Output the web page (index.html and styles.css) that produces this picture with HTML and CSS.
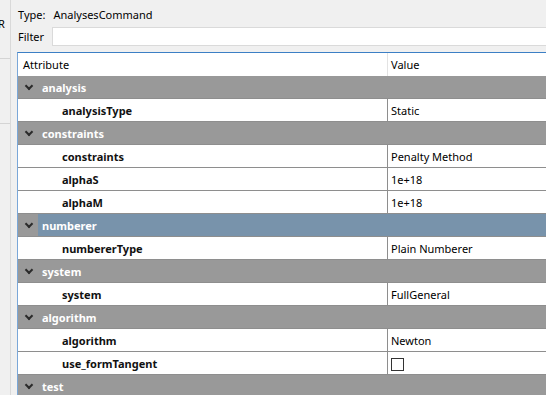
FILE: index.html
```html
<!DOCTYPE html>
<html lang="en">
  <head>
    <meta charset="UTF-8" />
    <title>Analyses Command Properties</title>
    <link rel="stylesheet" href="styles.css">
  </head>
  <body>
    <div class="app">
      <!-- Neighbouring panel, mostly cut off -->
      <div class="side-strip">
        <span class="side-letter">R</span>
        <div class="side-rule first"></div>
        <div class="side-rule second"></div>
      </div>

      <!-- Property editor -->
      <div class="editor">
        <div class="type-line">
          <span class="type-label">Type:</span>
          <span>AnalysesCommand</span>
        </div>

        <div class="filter-line">
          <span class="filter-label">Filter</span>
          <input class="filter-input" type="text">
        </div>

        <div class="tree">
          <table>
            <thead>
              <tr>
                <th class="col-attr">Attribute</th>
                <th class="col-value">Value</th>
              </tr>
            </thead>
            <tbody>
              <tr class="group">
                <td colspan="2"><div class="group-cell"><span class="chevron"></span>analysis</div></td>
              </tr>
              <tr class="item">
                <td class="name">analysisType</td>
                <td class="value">Static</td>
              </tr>

              <tr class="group">
                <td colspan="2"><div class="group-cell"><span class="chevron"></span>constraints</div></td>
              </tr>
              <tr class="item">
                <td class="name">constraints</td>
                <td class="value">Penalty Method</td>
              </tr>
              <tr class="item">
                <td class="name">alphaS</td>
                <td class="value">1e+18</td>
              </tr>
              <tr class="item">
                <td class="name">alphaM</td>
                <td class="value">1e+18</td>
              </tr>

              <tr class="group selected">
                <td colspan="2"><div class="group-cell"><span class="chevron"></span>numberer</div></td>
              </tr>
              <tr class="item">
                <td class="name">numbererType</td>
                <td class="value">Plain Numberer</td>
              </tr>

              <tr class="group">
                <td colspan="2"><div class="group-cell"><span class="chevron"></span>system</div></td>
              </tr>
              <tr class="item">
                <td class="name">system</td>
                <td class="value">FullGeneral</td>
              </tr>

              <tr class="group">
                <td colspan="2"><div class="group-cell"><span class="chevron"></span>algorithm</div></td>
              </tr>
              <tr class="item">
                <td class="name">algorithm</td>
                <td class="value">Newton</td>
              </tr>
              <tr class="item">
                <td class="name">use_formTangent</td>
                <td class="value"><span class="checkbox"></span></td>
              </tr>

              <tr class="group">
                <td colspan="2"><div class="group-cell"><span class="chevron"></span>test</div></td>
              </tr>
            </tbody>
          </table>
        </div>
      </div>
    </div>
  </body>
</html>
```

FILE: styles.css
```css
/* General styles */
body {
  margin: 0;
  background-color: #f0f0f0;
  font-family: "Noto Sans", "Open Sans", sans-serif;
  font-size: 11px;
  color: #000;
  overflow: hidden;
}

.app {
  display: flex;
  height: 395px;
}

/* Left neighbour panel */
.side-strip {
  position: relative;
  width: 10px;
  flex-shrink: 0;
  border-right: 1px solid #d9d9d9;
  overflow: hidden;
}

.side-letter {
  position: absolute;
  left: -2px;
  top: 16px;
}

.side-rule {
  position: absolute;
  left: 0;
  right: 0;
  border-top: 1px solid #d4d4d4;
}

.side-rule.first {
  top: 58px;
}

.side-rule.second {
  top: 123px;
}

/* Editor panel */
.editor {
  flex: 1;
  padding-left: 6px;
  min-width: 0;
}

.type-line {
  height: 27px;
  display: flex;
  align-items: center;
  padding-left: 1px;
  padding-top: 1px;
  box-sizing: border-box;
}

.type-label {
  margin-right: 8px;
}

.filter-line {
  display: flex;
  align-items: center;
  height: 19px;
  padding-left: 1px;
}

.filter-label {
  width: 34px;
}

.filter-input {
  flex: 1;
  height: 19px;
  box-sizing: border-box;
  margin: 0 -4px 0 0;
  border: 1px solid #dadada;
  background-color: #fff;
  padding: 0;
}

/* Tree table */
.tree {
  margin-top: 6px;
  margin-right: -40px;
  border-top: 1px solid #3c7fc5;
  border-left: 1px solid #7aa7d8;
  background-color: #fff;
}

table {
  width: 100%;
  border-collapse: collapse;
  table-layout: fixed;
}

th {
  height: 23px;
  padding: 0 0 0 5px;
  font-weight: normal;
  text-align: left;
  background-color: #fff;
}

.col-attr {
  width: 364px;
  border-right: 1px solid #e3e3e3;
}

.col-value {
  padding-left: 3px;
}

td {
  height: 22px;
  padding: 0;
  border-bottom: 1px solid #8e8e8e;
  white-space: nowrap;
}

/* Category rows */
.group td {
  background-color: #999;
  color: #fff;
  font-weight: bold;
}

.group.selected td {
  background-color: #7893ab;
}

.group-cell {
  display: flex;
  align-items: center;
  height: 22px;
}

.chevron {
  width: 20px;
  height: 22px;
  margin-right: 4px;
  background-color: #999;
  position: relative;
}

.chevron::after {
  content: "";
  position: absolute;
  left: 8px;
  top: 7px;
  width: 4px;
  height: 4px;
  border-right: 2px solid #2b2b2b;
  border-bottom: 2px solid #2b2b2b;
  transform: rotate(45deg);
}

/* Property rows */
.item .name {
  padding-left: 44px;
  font-weight: bold;
  border-right: 1px solid #8e8e8e;
  color: #111;
}

.item .value {
  padding-left: 3px;
}

.checkbox {
  display: inline-block;
  width: 11px;
  height: 11px;
  border: 1px solid #333;
  background-color: #fff;
  vertical-align: middle;
}
```
